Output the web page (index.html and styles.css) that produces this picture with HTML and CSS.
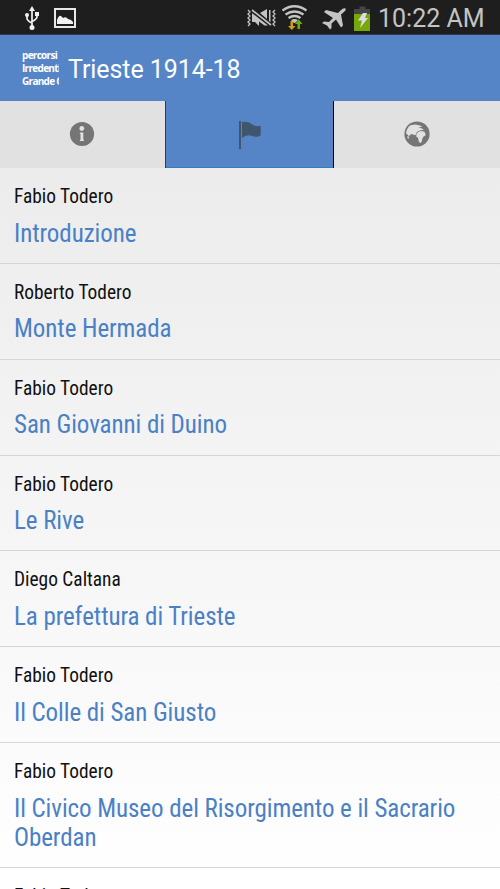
FILE: index.html
```
<!DOCTYPE html>
<html lang="it">
<head>
<meta charset="utf-8">
<title>Trieste 1914-18</title>
<link rel="stylesheet" href="styles.css">
</head>
<body>
<div class="status">
  <svg class="status-icons" width="370" height="34" viewBox="0 0 370 34">
    <g fill="none" stroke="#f2f2f2" stroke-width="1.700">
      <path d="M32 9v18M27 15v3.500q0 2 5 4.500M37 14v3q0 2-5 4.500"/>
    </g>
    <g fill="#f2f2f2">
      <path d="M32 6l3 5h-6z"/><circle cx="32" cy="27.500" r="2.500"/><circle cx="27" cy="15" r="2"/><path d="M35 12h4v4h-4z"/>
      <path d="M57 24v-4q2-5 4-4l2 2q3-2 5 1l3 1 2 2v2z"/>
    </g>
    <rect x="55" y="9" width="20" height="18" fill="none" stroke="#e8e8e8" stroke-width="2"/>
    <g fill="none" stroke="#c4c4c4">
      <path stroke-width="1.300" d="M248 10l2 2-2 2 2 2-2 2 2 2-2 2 2 2-2 2M275 10l-2 2 2 2-2 2 2 2-2 2 2 2-2 2 2 2"/>
      <path stroke-width="1.600" d="M252 10l19 15"/>
    </g>
    <path fill="#c4c4c4" d="M252 13l16 12.500h-3.500l-5.500-4v4.500l-4-4h-3zM260 13l7-4v10zM269 10h1.500v12l-1.500-1z"/>
    <g fill="none" stroke="#c4c4c4" stroke-width="2.300">
      <path d="M282.500 10.500q12-8.500 24 0M285.500 14.500q9-6 18 0M288.500 18q6-4 12 0"/>
    </g>
    <path fill="#c4c4c4" d="M291 20q3.500-2 7 0l-3 3h-1z"/>
    <path fill="#d0a010" d="M290.500 21h2.500v5h2.500L291.800 30 288 26h2.500z"/>
    <path fill="#6fae0a" d="M297.500 29h2.500v-5h2.500L298.800 19.500 295 24h2.500z"/>
    <path fill="#c4c4c4" d="M345.500 8.500q-2-1-4.500 1.500l-3 3-12-3-2 2 9 6-4 4-5-.500-2 1.500 5 2.500 3 4 1.500-1.500v-4.500l4.500-4 5 8 2-2-2-11 3-2.500q2.500-2.500 1.500-3.500z"/>
    <path fill="#454545" d="M359.500 6.500h6V9h-6zM354 9h17v5h-17z"/>
    <path fill="#77a80a" d="M354 14h17v17h-17z"/>
    <path fill="#dedede" d="M363 13h4l-2 5h3l-8 10 2-7.500h-4z"/>
  </svg>
  <span class="clock">10:22 AM</span>
</div>
<header class="bar">
  <div class="logo">percorsi<br>Irredenti<br>Grande G</div>
  <h1>Trieste 1914-18</h1>
</header>
<nav class="tabs">
  <div class="tab">
    <svg class="info" width="26" height="26" viewBox="0 0 26 26"><circle cx="13" cy="13" r="12.100" fill="#757575"/><circle cx="12.800" cy="7.500" r="2.400" fill="#e1e1e1"/><path fill="#e1e1e1" d="M10.900 11.500h3.400v7.300h.6V20h-4v-1.200h.6v-6h-.6z"/></svg>
  </div>
  <div class="tab active">
    <svg width="24" height="30" viewBox="0 0 24 30"><path fill="#40566f" d="M1 1h2v28H1zM4 2q6-1 9.500 2 3.500 3 9.200 1.800v9.400q-3.500 2.800-9 .5Q8 14 4 18z"/></svg>
  </div>
  <div class="tab">
    <svg class="globe" width="26" height="26" viewBox="0 0 26 26"><circle cx="13" cy="13" r="12.600" fill="#757575"/><path fill="#e1e1e1" d="M2 12.500Q2.500 7 6.500 4.200l5-.6 5.500 1.200 1 1-3.500.7 3 .8 2.500 1.500-3 .4-3 1-1.500 1.500-1 2.500-2.500-.7-1.500-.5-1.500 1-1 1.500-1-1.500zM12.500 13l2-2.200 3-.8 3 .8L21.800 14l-2.500 1.800-1 2.200-.8 3.300-1.200.7-1.500-1.300-.8-3.900-1.800-1.300zM3 16l1.300-1 .7 2-.7 1z"/></svg>
  </div>
</nav>
<main class="list">
  <article class="row"><p class="author">Fabio Todero</p><h2>Introduzione</h2></article>
  <article class="row"><p class="author">Roberto Todero</p><h2>Monte Hermada</h2></article>
  <article class="row"><p class="author">Fabio Todero</p><h2>San Giovanni di Duino</h2></article>
  <article class="row"><p class="author">Fabio Todero</p><h2>Le Rive</h2></article>
  <article class="row"><p class="author">Diego Caltana</p><h2>La prefettura di Trieste</h2></article>
  <article class="row"><p class="author">Fabio Todero</p><h2>Il Colle di San Giusto</h2></article>
  <article class="row"><p class="author">Fabio Todero</p><h2>Il Civico Museo del Risorgimento e il Sacrario Oberdan</h2></article>
  <article class="row"><p class="author">Fabio Todero</p></article>
</main>
</body>
</html>
```
FILE: styles.css
```
* { box-sizing: border-box; }
body {
  margin: 0;
  height: 889px;
  overflow: hidden;
  display: flex;
  flex-direction: column;
  font-family: Roboto, sans-serif;
}
h1, h2, p { margin: 0; font-weight: 400; }
svg { display: block; }
.status {
  flex: none;
  height: 35px;
  display: flex;
  background: #1e1e1e;
  border-bottom: 1px solid #2d3b50;
}
.status-icons { flex: none; }
.clock {
  margin-left: 8px;
  font-size: 25px;
  line-height: 37px;
  color: #c4c4c4;
  white-space: nowrap;
}
.bar {
  flex: none;
  height: 66px;
  padding-left: 22px;
  display: flex;
  align-items: center;
  background: #5585c7;
  color: #fff;
}
.logo {
  width: 37px;
  margin: 0 9px 0 0;
  overflow: hidden;
  white-space: nowrap;
  font: 700 10px/13px "Open Sans", sans-serif;
  letter-spacing: -0.7px;
}
h1 { font-size: 25px; line-height: 30px; padding-top: 3px; letter-spacing: -0.07px; }
.tabs {
  flex: none;
  height: 67px;
  display: grid;
  grid-template-columns: 165px 169px 166px;
}
.tab {
  display: flex;
  align-items: center;
  justify-content: center;
  background: #e1e1e1;
}
.tab.active {
  background: #5585c7;
  border-left: 1px solid #253f60;
  border-right: 1px solid #000;
  box-shadow: inset 0 -1px #347dc5;
}
.info { margin: 0 2px 1px 0; }
.globe { margin: 0 1px 1px 0; }
.list {
  flex: 1;
  min-height: 0;
  overflow: hidden;
  background: linear-gradient(#ececec, #fff);
  font-family: "Roboto Condensed", Roboto, sans-serif;
  font-stretch: condensed;
}
.row {
  min-height: 95.85px;
  padding: 17px 14px 14.6px;
  border-bottom: 1px solid #d6d6d6;
}
.author { font-size: 19.4px; line-height: 24px; color: #111; }
.row h2 {
  margin-top: 9.6px;
  font-size: 25px;
  line-height: 29.3px;
  letter-spacing: -0.07px;
  color: #4a80c6;
}
```
